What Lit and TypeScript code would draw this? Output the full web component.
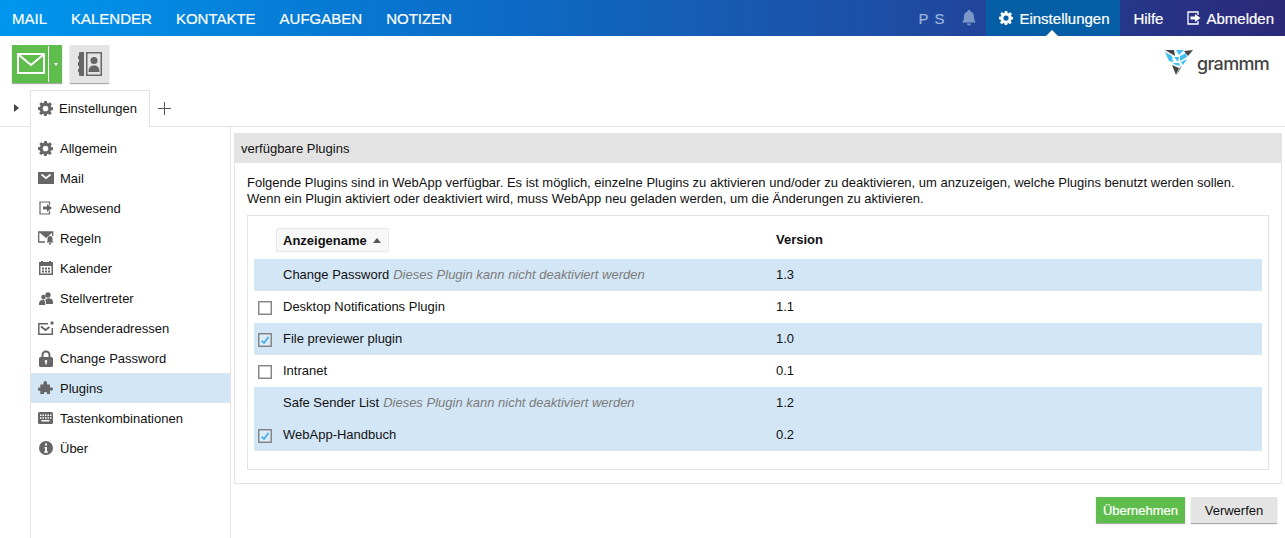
import { LitElement, html, css, svg } from "lit";
import { customElement } from "lit/decorators.js";

const gear = (s: number, c: string) => html`<svg width=${s} height=${s} viewBox="0 0 16 16"><path fill=${c} fill-rule="evenodd" d="M6.600 0h2.800l.4 2.200 1.100.5 1.900-1.300 2 2-1.300 1.900.5 1.100 2 .4v2.800l-2.200.4-.5 1.100 1.300 1.900-2 2-1.900-1.300-1.100.5-.4 2.200H6.600l-.4-2.200-1.100-.5-1.900 1.300-2-2 1.300-1.900-.5-1.100L0 9.400V6.600l2.200-.4.5-1.100-1.300-1.900 2-2 1.900 1.300 1.100-.5zM8 5a3 3 0 1 0 0 6 3 3 0 0 0 0-6z"/></svg>`;

const G = "#666";
const icons: Record<string, unknown> = {
  gear: gear(15, G),
  mail: html`<svg width="16" height="12" viewBox="0 0 16 12"><path fill=${G} d="M0 0h16v12H0z"/><path fill="none" stroke="#fff" stroke-width="1.800" d="M3.500 2.500L8 6.200l4.500-3.700"/></svg>`,
  out: html`<svg width="14" height="14" viewBox="0 0 14 14"><path fill="none" stroke=${G} stroke-width="1.200" d="M10.500 4V1H1v12h9.500V10"/><path fill=${G} d="M4 5.500h4V3l5 4-5 4V8.500H4z"/></svg>`,
  rules: html`<svg width="16" height="14" viewBox="0 0 16 14"><path fill="none" stroke=${G} stroke-width="1.300" d="M7 11H.7V1h14v4"/><path fill=${G} d="M1 1h14L8 7zM12 5a2.500 2.500 0 0 1 2.500 2.500V10l1 1.500h-7l1-1.500V7.500A2.500 2.500 0 0 1 12 5zM11 12h2v1.500h-2z"/></svg>`,
  cal: html`<svg width="14" height="14" viewBox="0 0 14 14"><path fill=${G} fill-rule="evenodd" d="M0 1h2V0h2v1h6V0h2v1h2v13H0zM1.500 5v7.500h11V5z"/><path fill=${G} d="M3 6.500h2v2H3zM6 6.500h2v2H6zM9 6.500h2v2H9zM3 9.500h2v2H3zM6 9.500h2v2H6zM9 9.500h2v2H9z"/></svg>`,
  people: html`<svg width="14" height="13" viewBox="0 0 14 13"><circle fill=${G} cx="9" cy="3" r="2.700"/><circle fill=${G} cx="4.500" cy="5" r="2.300"/><path fill=${G} d="M6 8c2-2.500 6-2.500 7.500 0 .5 1 .5 2.500.5 4H7c0-1.500 0-3-1-4zM0 13c0-3 .5-5 4.500-5.500 1.500 1 1.800 3.500 1.800 5.500z"/></svg>`,
  sender: html`<svg width="16" height="14" viewBox="0 0 16 14"><path fill="none" stroke=${G} stroke-width="1.500" d="M10 2.700H.8v10.500h13.500V7"/><path fill="none" stroke=${G} stroke-width="1.800" d="M3 5.500l4.500 3.500 4-3"/><circle fill=${G} cx="14" cy="2" r="1.700"/></svg>`,
  lock: html`<svg width="14" height="17" viewBox="0 0 14 17"><path fill="none" stroke=${G} stroke-width="2" d="M3.500 8V5a3.500 3.500 0 0 1 7 0v3"/><path fill=${G} fill-rule="evenodd" d="M1.500 7h11A1.500 1.500 0 0 1 14 8.500v7a1.500 1.500 0 0 1-1.500 1.500h-11A1.500 1.500 0 0 1 0 15.500v-7A1.500 1.500 0 0 1 1.500 7zM7 10a1.300 1.300 0 0 0-.7 2.400V14.500h1.400v-2.100A1.300 1.300 0 0 0 7 10z"/></svg>`,
  puzzle: html`<svg width="15" height="15" viewBox="0 0 15 15"><path fill=${G} d="M5.500 2.500C5.500 1 6 0 7.300 0s1.700 1 1.700 2.500V3.500h3v3.200c1-.5 3-.6 3 1.300s-2 1.800-3 1.300V13H8.800c.5-1.400.3-2-1.300-2s-1.800.8-1.300 2H2.300V9.500c-1 .6-2.300.4-2.300-1.300s1.300-2 2.300-1.400V3.500h3.200z"/></svg>`,
  keys: html`<svg width="15" height="12" viewBox="0 0 15 12"><rect fill=${G} width="15" height="12" rx="1.500"/><g fill="#fff"><rect x="2" y="2.500" width="1.500" height="1.500"/><rect x="4.500" y="2.500" width="1.500" height="1.500"/><rect x="7" y="2.500" width="1.500" height="1.500"/><rect x="9.500" y="2.500" width="1.500" height="1.500"/><rect x="12" y="2.500" width="1.500" height="1.500"/><rect x="2" y="5.200" width="1.500" height="1.500"/><rect x="4.500" y="5.200" width="1.500" height="1.500"/><rect x="7" y="5.200" width="1.500" height="1.500"/><rect x="9.500" y="5.200" width="1.500" height="1.500"/><rect x="12" y="5.200" width="1.500" height="1.500"/><rect x="3.500" y="8" width="8" height="1.500"/></g></svg>`,
  info: html`<svg width="14" height="14" viewBox="0 0 14 14"><circle fill=${G} cx="7" cy="7" r="7"/><path fill="#fff" d="M6 2.500h2v2H6zM5.500 6h2.500v4.500h1v1.200H5V10.500h1V7.200h-.5z"/></svg>`,
};

const nav = [
  ["gear", "Allgemein"], ["mail", "Mail"], ["out", "Abwesend"], ["rules", "Regeln"], ["cal", "Kalender"],
  ["people", "Stellvertreter"], ["sender", "Absenderadressen"], ["lock", "Change Password"],
  ["puzzle", "Plugins"], ["keys", "Tastenkombinationen"], ["info", "Über"],
];

type Row = { name: string; note?: string; ver: string; state: "none" | "off" | "on"; sel: boolean };
const rows: Row[] = [
  { name: "Change Password", note: "Dieses Plugin kann nicht deaktiviert werden", ver: "1.3", state: "none", sel: true },
  { name: "Desktop Notifications Plugin", ver: "1.1", state: "off", sel: false },
  { name: "File previewer plugin", ver: "1.0", state: "on", sel: true },
  { name: "Intranet", ver: "0.1", state: "off", sel: false },
  { name: "Safe Sender List", note: "Dieses Plugin kann nicht deaktiviert werden", ver: "1.2", state: "none", sel: true },
  { name: "WebApp-Handbuch", ver: "0.2", state: "on", sel: true },
];

const logo = svg`<svg width="28" height="25" viewBox="0 0 28 25">
  <path fill="#3fc1f5" d="M0 2l7 4 1 6-4-1zM11 0h8l-5 5zM9 7l5 0-1 5zM15 6l6-3 1 4-7 4zM9 13l5 0 1 3-7-2zM16 12l6-3-4 6z"/>
  <path fill="#444" d="M0 0h9l1 6zM19 1l9-1-5 6zM7 15l7 3-3 7zM14 19l3-4-5 10z"/>
</svg>`;

@customElement("app-root")
export class AppRoot extends LitElement {
  static styles = css`
    :host { display: block; width: 1285px; height: 538px; overflow: hidden; font-family: "Liberation Sans", Arial, sans-serif; font-size: 13px; color: #111; background: #fff; }
    .top { height: 36px; display: flex; align-items: center; color: #fff; background: linear-gradient(90deg, #0096ee 0%, #0a6fc9 35%, #1d4fa6 68%, #2b2878 100%); }
    .mods { display: flex; gap: 24px; padding-left: 12px; font-size: 15px; font-weight: 400; -webkit-text-stroke: 0.2px #fff; }
    .right { margin-left: auto; display: flex; align-items: stretch; height: 36px; font-size: 15px; -webkit-text-stroke: 0.2px #fff; }
    .right > div { display: flex; align-items: center; }
    .ps { color: #9db4dc; font-size: 15px; letter-spacing: 1px; margin-right: 17px; -webkit-text-stroke: 0.2px #9db4dc; }
    .bell { margin-right: 10px; }
    .active { position: relative; background: #065fa6; padding: 0 0 0 13px; width: 134px; box-sizing: border-box; gap: 6px; }
    .active::after { content: ""; position: absolute; left: 60px; bottom: 0; border: 6px solid transparent; border-top: 0; border-bottom-color: #fff; }
    .help { padding: 0 13px; }
    .logout { padding-right: 11px; padding-left: 11px; gap: 5px; }
    .bar2 { height: 54px; display: flex; box-sizing: border-box; padding: 9px 0 0 12px; gap: 8px; position: relative; }
    .new { width: 50px; height: 38px; background: #5fbd4e; box-shadow: 0 1px 1px #aaa; display: flex; position: relative; }
    .new .sep { position: absolute; left: 36px; top: 1px; bottom: 1px; width: 1px; background: #fff; }
    .new .env { position: absolute; left: 5px; top: 8px; }
    .new .caret { position: absolute; left: 42px; top: 18px; border: 2.500px solid transparent; border-top: 3px solid #fff; border-bottom: 0; }
    .addr { width: 39px; height: 38px; background: #e4e4e4; box-shadow: 0 1px 1px #aaa; display: flex; align-items: center; justify-content: center; }
    .logo { margin-left: auto; margin-right: 16px; margin-top: 5px; display: flex; align-items: flex-start; gap: 4px; }
    .logo span { font-family: Inter, sans-serif; font-size: 18px; font-weight: 500; color: #444; letter-spacing: -0.7px; line-height: 22px; margin-top: 3px; }
    .tabs { height: 37px; display: flex; position: relative; box-sizing: border-box; border-bottom: 1px solid #e3e3e3; }
    .tg { width: 30px; display: flex; align-items: center; justify-content: center; padding-left: 3px; box-sizing: border-box; }
    .tg i { border: 4.500px solid transparent; border-left: 5px solid #444; border-right: 0; }
    .tab { width: 120px; height: 37px; box-sizing: border-box; border: 1px solid #e3e3e3; border-bottom: 0; background: #fff; display: flex; align-items: center; gap: 6px; padding: 0 0 2px 7px; margin-bottom: -1px; }
    .plus { width: 29px; display: flex; align-items: center; justify-content: center; }
    .main { display: flex; height: 411px; }
    .side { width: 201px; margin-left: 30px; box-sizing: border-box; border-left: 1px solid #e3e3e3; border-right: 1px solid #e3e3e3; padding-top: 6px; flex: none; }
    .item { height: 30px; display: flex; align-items: center; }
    .item.sel { background: #d3e6f6; }
    .item .ic { width: 29px; display: flex; justify-content: center; flex: none; }
    .content { flex: 1; padding: 6px 0 0 3px; min-width: 0; display: flex; flex-direction: column; }
    .panel { width: 1048px; height: 351px; box-sizing: border-box; border: 1px solid #e3e3e3; border-top: 0; display: flex; flex-direction: column; }
    .ph { height: 30px; margin: 0 -1px; background: #e3e3e3; display: flex; align-items: center; padding-left: 7px; }
    .desc { padding: 12px 12px 0 12px; line-height: 16px; height: 36px; }
    .grid { margin: 4px 0 0 12px; width: 1022px; height: 255px; box-sizing: border-box; border: 1px solid #e3e3e3; padding: 12px 6px 0 6px; }
    .head { height: 31px; display: flex; align-items: flex-start; font-weight: 700; position: relative; }
    .sort { margin-left: 22px; height: 24px; width: 113px; box-sizing: border-box; border: 1px solid #e8e8e8; border-radius: 2px; background: #f8f8f8; display: flex; align-items: center; padding-left: 6px; gap: 6px; }
    .sort i { border: 4.500px solid transparent; border-bottom: 5px solid #555; border-top: 0; }
    .ver { position: absolute; left: 522px; top: 4px; }
    .row { height: 32px; box-sizing: border-box; padding-bottom: 2px; display: flex; align-items: center; position: relative; }
    .row.sel { background: #d3e6f6; }
    .cb { width: 29px; flex: none; display: flex; justify-content: flex-start; padding-left: 4px; padding-top: 4px; box-sizing: border-box; }
    .note { color: #7c7c7c; font-style: italic; margin-left: 4px; }
    .ver2 { position: absolute; left: 522px; }
    .actions { display: flex; justify-content: flex-end; gap: 6px; padding: 13px 8px 0 0; }
    .btn { height: 26px; display: flex; align-items: center; justify-content: center; box-shadow: 0 1px 1px #aaa; }
    .ok { width: 89px; background: #5fbd4e; color: #fff; -webkit-text-stroke: 0.2px #fff; }
    .no { width: 86px; background: #e4e4e4; }
  `;

  box(state: Row["state"]) {
    if (state === "none") return html`<span class="cb"></span>`;
    return html`<span class="cb"><svg width="14" height="14" viewBox="0 0 14 14">
      <rect x="0.750" y="0.750" width="12.500" height="12.500" fill=${state === "on" ? "#dcebf7" : "#fff"} stroke="#777" stroke-width="1.300"/>
      ${state === "on" ? svg`<path d="M3.500 7.500l2.500 2.500 4.500-6" fill="none" stroke="#3fa9ee" stroke-width="1.600"/>` : ""}
    </svg></span>`;
  }

  render() {
    return html`
      <div class="top">
        <div class="mods"><span>MAIL</span><span>KALENDER</span><span>KONTAKTE</span><span>AUFGABEN</span><span>NOTIZEN</span></div>
        <div class="right">
          <div class="ps">P S</div>
          <div class="bell"><svg width="14" height="16" viewBox="0 0 14 16"><path fill="#7d97c9" d="M7 0c1 0 1.500.6 1.500 1.400C10.800 2 12 4 12 6.500c0 3 .6 4.500 2 6H0c1.400-1.500 2-3 2-6C2 4 3.200 2 5.500 1.400 5.500.6 6 0 7 0zM5 13.500h4A2 2 0 0 1 5 13.500z"/></svg></div>
          <div class="active">${gear(14, "#fff")}<span>Einstellungen</span></div>
          <div class="help">Hilfe</div>
          <div class="logout"><svg width="14" height="14" viewBox="0 0 14 14"><path fill="none" stroke="#fff" stroke-width="1.300" d="M11 4V1H1v12h10v-3"/><path fill="#fff" d="M3.500 5.500H8V3l5.500 4L8 11V8.500H3.500z"/></svg><span>Abmelden</span></div>
        </div>
      </div>
      <div class="bar2">
        <div class="new">
          <svg class="env" width="28" height="21" viewBox="0 0 28 21"><rect x="1" y="1" width="26" height="19" fill="none" stroke="#fff" stroke-width="2"/><path d="M2 2l12 10L26 2" fill="none" stroke="#fff" stroke-width="2"/></svg>
          <span class="sep"></span><span class="caret"></span>
        </div>
        <div class="addr"><svg width="24" height="24" viewBox="0 0 24 24"><path fill="none" stroke="#666" stroke-width="1.500" d="M8.750.75h14.500v22.500H8.750z"/><path fill="#666" d="M2 0h4v24H2a1 1 0 0 1-1-1v-3h-1v-3h1v-3h-1v-4h1V7h-1V4h1V1a1 1 0 0 1 1-1z"/><circle fill="#666" cx="16" cy="8.500" r="3.500"/><path fill="#666" d="M10.500 20c0-4 1.500-6.500 5.500-6.500s5.500 2.500 5.500 6.500z"/></svg></div>
        <div class="logo">${logo}<span>grammm</span></div>
      </div>
      <div class="tabs">
        <div class="tg"><i></i></div>
        <div class="tab">${gear(15, G)}<span>Einstellungen</span></div>
        <div class="plus"><svg width="13" height="13" viewBox="0 0 13 13"><path d="M6.500 0v13M0 6.500h13" stroke="#555" stroke-width="1"/></svg></div>
      </div>
      <div class="main">
        <div class="side">
          ${nav.map(([ic, label]) => html`<div class="item ${label === "Plugins" ? "sel" : ""}"><span class="ic">${icons[ic]}</span><span>${label}</span></div>`)}
        </div>
        <div class="content">
          <div class="panel">
            <div class="ph">verfügbare Plugins</div>
            <div class="desc">Folgende Plugins sind in WebApp verfügbar. Es ist möglich, einzelne Plugins zu aktivieren und/oder zu deaktivieren, um anzuzeigen, welche Plugins benutzt werden sollen.<br>Wenn ein Plugin aktiviert oder deaktiviert wird, muss WebApp neu geladen werden, um die Änderungen zu aktivieren.</div>
            <div class="grid">
              <div class="head"><div class="sort"><span>Anzeigename</span><i></i></div><span class="ver">Version</span></div>
              ${rows.map((r) => html`<div class="row ${r.sel ? "sel" : ""}">${this.box(r.state)}<span>${r.name}</span>${r.note ? html`<span class="note">${r.note}</span>` : ""}<span class="ver2">${r.ver}</span></div>`)}
            </div>
          </div>
          <div class="actions"><div class="btn ok">Übernehmen</div><div class="btn no">Verwerfen</div></div>
        </div>
      </div>
    `;
  }
}
